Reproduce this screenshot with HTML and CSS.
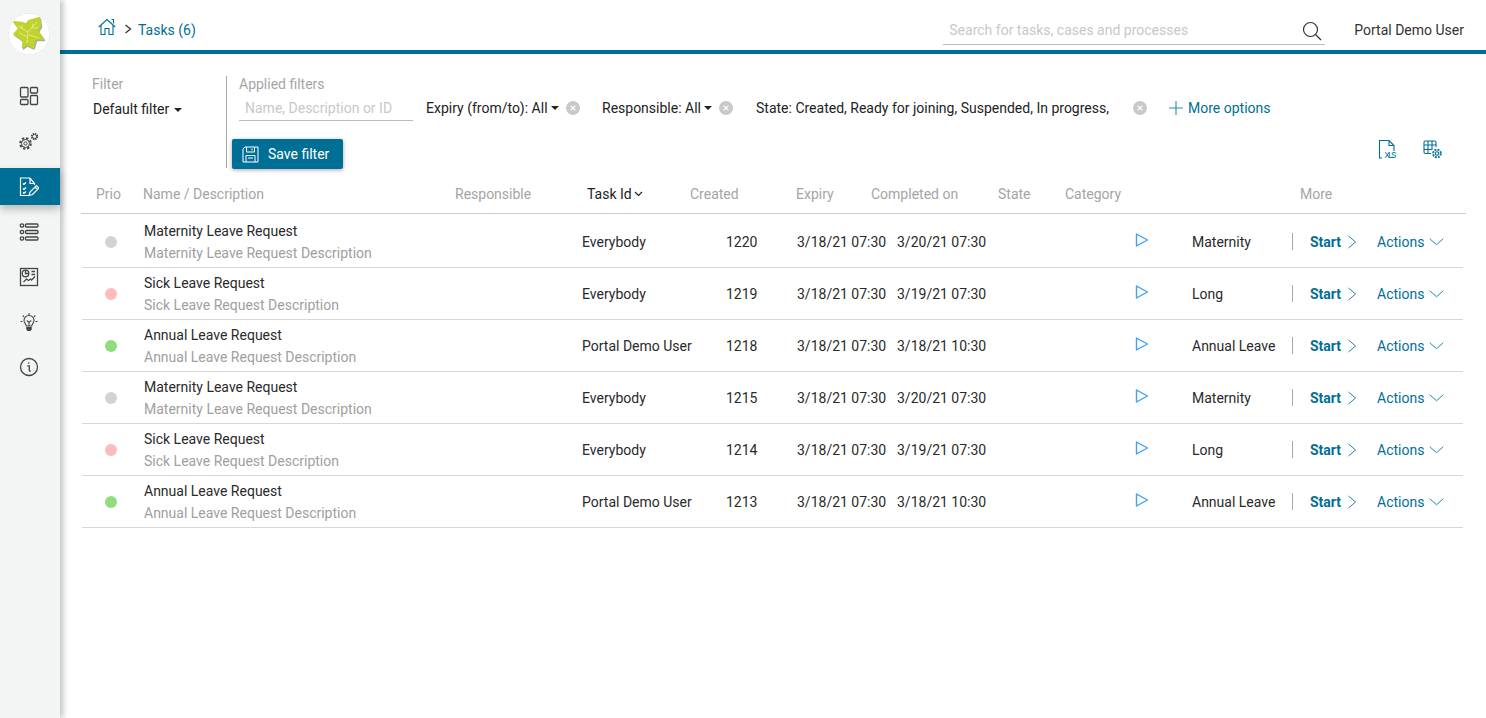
FILE: index.html
```html
<!DOCTYPE html>
<html lang="en">
<head>
  <meta charset="UTF-8">
  <title>Tasks</title>
  <link rel="stylesheet" href="styles.css">
</head>
<body>
  <svg class="defs" width="0" height="0">
    <symbol id="play" viewBox="0 0 14 14"><path d="M1.500 1l11 6-11 6z" fill="none" stroke="#3f9ef5" stroke-width="1.400" stroke-linejoin="round"/></symbol>
    <symbol id="chev-right" viewBox="0 0 10 14"><path d="M1.500 1l7 6-7 6" fill="none" stroke="#2a86a6" stroke-width="1"/></symbol>
    <symbol id="chev-down" viewBox="0 0 15 8"><path d="M.7.7l6.800 6 6.800-6" fill="none" stroke="#2a86a6" stroke-width="1"/></symbol>
    <symbol id="clear" viewBox="0 0 14 14"><circle cx="7" cy="7" r="7" fill="#c9c9c9"/><path d="M4.600 4.600l4.800 4.800M9.400 4.600l-4.800 4.800" stroke="#fff" stroke-width="1.200"/></symbol>
  </svg>

  <aside class="sidebar">
    <div class="logo">
      <svg width="34" height="36" viewBox="0 0 34 36">
        <path d="M2 5.700L9.700 6.500 14 8 17 4.500 27.500 1.800 28.500 9.700 25.500 15 31.500 23 23.700 23 21 31.500 14.500 28.500 10.500 31.500 11.300 24.700 2 18 7 12.500z" fill="#a9aea2" stroke="#a9aea2" stroke-width="1.500" stroke-linejoin="round" transform="translate(1 1.500)"/>
        <path d="M2 5.700L9.700 6.500 14 8 17 4.500 27.500 1.800 28.500 9.700 25.500 15 31.500 23 23.700 23 21 31.500 14.500 28.500 10.500 31.500 11.300 24.700 2 18 7 12.500z" fill="#c0d22c" stroke="#c0d22c" stroke-width="1.500" stroke-linejoin="round"/>
        <path d="M15 27l1-11-10-6M16 16l9-10M17 19l10 3M15.500 21l-8-4M20 12l1-4M21 12l5 0M10 13l0-4" stroke="#e6eeb0" stroke-width=".8" fill="none"/>
      </svg>
    </div>
    <nav class="nav">
      <a class="nav-item">
        <svg width="20" height="20" viewBox="0 0 20 20" fill="none" stroke="#444" stroke-width="1.300"><rect x="1.500" y="1.500" width="7.500" height="9.500" rx="1"/><rect x="11.500" y="1.500" width="7" height="5.500" rx="1"/><rect x="1.500" y="13.500" width="7.500" height="5" rx="1"/><rect x="11.500" y="9.500" width="7" height="9" rx="1"/></svg>
      </a>
      <a class="nav-item nav-gears">
        <svg width="20" height="20" viewBox="0 0 20 20" fill="none" stroke="#444"><circle cx="6.500" cy="11.500" r="5.300" stroke-dasharray="2.300 1.860" stroke-width="2"/><circle cx="6.500" cy="11.500" r="4" stroke-width="1"/><circle cx="6.500" cy="11.500" r="1.600" stroke-width="1"/><circle cx="15.500" cy="4.500" r="2.900" stroke-dasharray="1.400 .88" stroke-width="1.500"/><circle cx="15.500" cy="4.500" r="2.100" stroke-width="1"/></svg>
      </a>
      <a class="nav-item active">
        <svg width="20" height="20" viewBox="0 0 20 20" fill="none" stroke="#fff" stroke-width="1.200"><path d="M10 18.500H1.500V1H11l4.500 5.500V8"/><path d="M11 1v5.500h4.500M4 6.500l1 1 2-2M4 11.500l1 1 2-2M4 15.500l1 1 2-2"/><path d="M10 18.500l1-3.500 6.500-6.500 2.500 2.500-6.500 6.500zM16 10l2.500 2.500"/></svg>
      </a>
      <a class="nav-item">
        <svg width="20" height="20" viewBox="0 0 20 20" fill="none" stroke="#444" stroke-width="1.300"><circle cx="3" cy="3.500" r="1.700"/><circle cx="3" cy="10" r="1.700"/><circle cx="3" cy="16.500" r="1.700"/><rect x="6.500" y="2" width="12.500" height="3" rx="1"/><rect x="6.500" y="8.500" width="12.500" height="3" rx="1"/><rect x="6.500" y="15" width="12.500" height="3" rx="1"/></svg>
      </a>
      <a class="nav-item">
        <svg width="20" height="20" viewBox="0 0 20 20" fill="none" stroke="#444" stroke-width="1.300"><rect x="1.500" y="1.500" width="17" height="17"/><circle cx="6.500" cy="6.500" r="3.300"/><path d="M6.500 3.200V6.500h3.300M12.500 4.500h3.500M12.500 7.500h3.500M4.500 15l3-3 2 1.500 2-1.500 1 1 3.500-3.500"/></svg>
      </a>
      <a class="nav-item">
        <svg width="20" height="20" viewBox="0 0 20 20" fill="none" stroke="#444" stroke-width="1.100"><path d="M7.300 14c0-2-2.300-3-2.300-5.500a5 5 0 0110 0c0 2.500-2.300 3.500-2.300 5.500zM10 1v2M1.500 9.500h2M16.500 9.500h2M3.700 3.500l1.300 1.300M16.300 3.500L15 4.800M7.800 8.500l2.200 2 2.200-2M10 10.500V14"/><path d="M7.800 15.500h4.400v1.500l-1 1.500H8.800l-1-1.500z" fill="#444"/></svg>
      </a>
      <a class="nav-item">
        <svg width="20" height="20" viewBox="0 0 20 20" fill="none" stroke="#444" stroke-width="1.300"><circle cx="10" cy="10" r="8.500"/><path d="M8.300 8.800H10.300V13.300c0 .8.700 1 1.500.6"/><circle cx="9.800" cy="6" r=".8" fill="#444" stroke="none"/></svg>
      </a>
    </nav>
  </aside>

  <main class="main">
    <header class="topbar">
      <div class="breadcrumb">
        <svg class="crumb-home" width="18" height="18" viewBox="0 0 18 18" fill="none" stroke="#006f95" stroke-width="1.100"><path d="M.8 9L9 1.500 17.200 9M3 7.500V16.500h4V10.500h4V16.500h4V7.500M13.500 1.500H15.500V5.500"/></svg>
        <svg class="crumb-sep" width="8" height="10" viewBox="0 0 8 10" fill="none" stroke="#333" stroke-width="1.300"><path d="M1.500 1l5 4-5 4"/></svg>
        <span class="crumb-link">Tasks (6)</span>
      </div>
      <div class="search">
        <span class="search-text">Search for tasks, cases and processes</span>
        <svg width="20" height="20" viewBox="0 0 20 20" fill="none" stroke="#333" stroke-width="1.200"><circle cx="8.500" cy="8.500" r="7"/><path d="M13.500 13.500l5.500 5.500"/></svg>
      </div>
      <span class="user">Portal Demo User</span>
    </header>

    <section class="filters">
      <div class="filter-default">
        <div class="filter-label">Filter</div>
        <div class="filter-select">Default filter <i class="caret"></i></div>
      </div>
      <div class="filter-applied">
        <div class="filter-label">Applied filters</div>
        <div class="filter-line">
          <span class="filter-input">Name, Description or ID</span>
          <span class="chip chip-expiry">Expiry (from/to): All <i class="caret"></i><svg width="14" height="14"><use href="#clear"/></svg></span>
          <span class="chip chip-resp">Responsible: All <i class="caret"></i><svg width="14" height="14"><use href="#clear"/></svg></span>
          <span class="chip chip-state">State: Created, Ready for joining, Suspended, In progress,<svg width="14" height="14"><use href="#clear"/></svg></span>
          <span class="more-options">
            <svg width="14" height="14" viewBox="0 0 14 14" stroke="#2a8cab" stroke-width="1.100"><path d="M7 0v14M0 7h14"/></svg>
            More options
          </span>
        </div>
        <div class="filter-actions">
          <button class="save-btn">
            <svg width="17" height="17" viewBox="0 0 17 17" fill="none" stroke="#fff" stroke-width="1"><path d="M1 3l2-2h13v15H1zM4.500 1v5h8V1M10 2.500v2M4 16v-6.500h9V16M6 12h5"/></svg>
            Save filter
          </button>
          <div class="export-icons">
            <svg class="xls-icon" width="20" height="22" viewBox="0 0 20 22" fill="none" stroke="#006f95" stroke-width="1.100"><path d="M4 18H1.500V.5H11l5 5v5.500M11 .5v5h5"/><text x="6.500" y="18" class="xls" textLength="12">XLS</text></svg>
            <svg width="20" height="20" viewBox="0 0 20 20" fill="none" stroke="#006f95" stroke-width="1.100"><path d="M8 13.500H2.500a1.500 1.500 0 01-1.500-1.500V2.500A1.500 1.500 0 012.500 1h9A1.500 1.500 0 0113 2.500V7M1 5h12M1 9.500h8M5 1v12.500M9 1v9"/><circle cx="14" cy="13.500" r="1.700"/><circle cx="14" cy="13.500" r="3.900" stroke-dasharray="2 1.060" stroke-width="1.800"/></svg>
          </div>
        </div>
      </div>
    </section>

    <section class="tasks">
      <div class="task-head">
        <span class="h-prio">Prio</span>
        <span class="h-name">Name / Description</span>
        <span class="h-resp">Responsible</span>
        <span class="h-id">Task Id<svg width="9" height="6" viewBox="0 0 9 6" fill="none" stroke="#222" stroke-width="1.200"><path d="M1 1l3.500 3.500L8 1"/></svg></span>
        <span class="h-created">Created</span>
        <span class="h-expiry">Expiry</span>
        <span class="h-completed">Completed on</span>
        <span class="h-state">State</span>
        <span class="h-cat">Category</span>
        <span class="h-more">More</span>
      </div>

      <div class="task-row first">
        <span class="dot grey"></span>
        <div class="task-name"><div>Maternity Leave Request</div><div class="desc">Maternity Leave Request Description</div></div>
        <span>Everybody</span><span>1220</span><span>3/18/21 07:30</span><span>3/20/21 07:30</span>
        <svg class="play" width="14" height="14"><use href="#play"/></svg>
        <span>Maternity</span>
        <span class="task-links"><a class="start">Start</a><svg width="10" height="14"><use href="#chev-right"/></svg><a class="actions">Actions</a><svg width="15" height="8"><use href="#chev-down"/></svg></span>
      </div>
      <div class="task-row">
        <span class="dot pink"></span>
        <div class="task-name"><div>Sick Leave Request</div><div class="desc">Sick Leave Request Description</div></div>
        <span>Everybody</span><span>1219</span><span>3/18/21 07:30</span><span>3/19/21 07:30</span>
        <svg class="play" width="14" height="14"><use href="#play"/></svg>
        <span>Long</span>
        <span class="task-links"><a class="start">Start</a><svg width="10" height="14"><use href="#chev-right"/></svg><a class="actions">Actions</a><svg width="15" height="8"><use href="#chev-down"/></svg></span>
      </div>
      <div class="task-row">
        <span class="dot green"></span>
        <div class="task-name"><div>Annual Leave Request</div><div class="desc">Annual Leave Request Description</div></div>
        <span>Portal Demo User</span><span>1218</span><span>3/18/21 07:30</span><span>3/18/21 10:30</span>
        <svg class="play" width="14" height="14"><use href="#play"/></svg>
        <span>Annual Leave</span>
        <span class="task-links"><a class="start">Start</a><svg width="10" height="14"><use href="#chev-right"/></svg><a class="actions">Actions</a><svg width="15" height="8"><use href="#chev-down"/></svg></span>
      </div>
      <div class="task-row">
        <span class="dot grey"></span>
        <div class="task-name"><div>Maternity Leave Request</div><div class="desc">Maternity Leave Request Description</div></div>
        <span>Everybody</span><span>1215</span><span>3/18/21 07:30</span><span>3/20/21 07:30</span>
        <svg class="play" width="14" height="14"><use href="#play"/></svg>
        <span>Maternity</span>
        <span class="task-links"><a class="start">Start</a><svg width="10" height="14"><use href="#chev-right"/></svg><a class="actions">Actions</a><svg width="15" height="8"><use href="#chev-down"/></svg></span>
      </div>
      <div class="task-row">
        <span class="dot pink"></span>
        <div class="task-name"><div>Sick Leave Request</div><div class="desc">Sick Leave Request Description</div></div>
        <span>Everybody</span><span>1214</span><span>3/18/21 07:30</span><span>3/19/21 07:30</span>
        <svg class="play" width="14" height="14"><use href="#play"/></svg>
        <span>Long</span>
        <span class="task-links"><a class="start">Start</a><svg width="10" height="14"><use href="#chev-right"/></svg><a class="actions">Actions</a><svg width="15" height="8"><use href="#chev-down"/></svg></span>
      </div>
      <div class="task-row">
        <span class="dot green"></span>
        <div class="task-name"><div>Annual Leave Request</div><div class="desc">Annual Leave Request Description</div></div>
        <span>Portal Demo User</span><span>1213</span><span>3/18/21 07:30</span><span>3/18/21 10:30</span>
        <svg class="play" width="14" height="14"><use href="#play"/></svg>
        <span>Annual Leave</span>
        <span class="task-links"><a class="start">Start</a><svg width="10" height="14"><use href="#chev-right"/></svg><a class="actions">Actions</a><svg width="15" height="8"><use href="#chev-down"/></svg></span>
      </div>
    </section>
  </main>
</body>
</html>
```
FILE: styles.css
```css
* {
  margin: 0;
  padding: 0;
  box-sizing: border-box;
}

html, body {
  height: 100%;
  overflow: hidden;
}

body {
  font-family: Roboto, sans-serif;
  font-size: 14px;
  color: #222;
  background: #fff;
  display: flex;
}

.defs {
  position: absolute;
}

svg {
  display: block;
  flex: none;
}

/* sidebar */
.sidebar {
  width: 60px;
  flex: none;
  background: #f3f5f4;
  box-shadow: 3px 0 6px rgba(0, 0, 0, 0.25);
  padding-top: 13px;
  position: relative;
}

.logo {
  width: 42px;
  height: 42px;
  margin-left: 8px;
  border-radius: 50%;
  background: #fff;
  border: 1px dotted #ddd;
  display: flex;
  align-items: center;
  justify-content: center;
}

.nav {
  margin-top: 18.500px;
  display: flex;
  flex-direction: column;
}

.nav-item {
  height: 45px;
  display: flex;
  align-items: center;
  justify-content: center;
}

.nav-item svg {
  margin-left: -2px;
}

.nav-gears svg {
  margin-top: 2px;
}

.nav-item.active {
  height: 37px;
  margin: 4.500px 0;
  background: #006f95;
  box-shadow: 0 4px 8px rgba(0, 0, 0, 0.25);
}

/* top bar */
.main {
  flex: 1;
  min-width: 0;
}

.topbar {
  height: 54px;
  border-bottom: 4px solid #006f95;
  display: flex;
  align-items: center;
  padding: 10px 22px 0 38px;
}

.breadcrumb {
  display: flex;
  align-items: center;
  flex: 1;
}

.crumb-home {
  margin-top: -6px;
}

.crumb-sep {
  margin: -2px 6px 0 8px;
}

.crumb-link {
  color: #006f95;
}

.search {
  width: 382px;
  height: 29px;
  margin-right: 29px;
  border-bottom: 1px solid #bbb;
  display: flex;
  align-items: center;
  justify-content: space-between;
  padding: 0 3px 0 6px;
}

.search svg {
  margin-top: 3px;
}

.search-text {
  color: #c8c8c8;
}

.user {
  color: #333;
}

/* filters */
.filters {
  display: flex;
  padding: 22px 0 0 32px;
  height: 120px;
}

.filter-label {
  color: #a5a5a5;
  line-height: 17px;
}

.filter-default {
  width: 135px;
  border-right: 1px solid #aaa;
  height: 92px;
}

.filter-select {
  margin: 8px 0 0 1px;
  line-height: 17px;
}

.caret {
  display: inline-block;
  border: 4px solid transparent;
  border-top: 4px solid #222;
  border-bottom: 0;
  vertical-align: 2px;
  margin-left: 1px;
}

.filter-applied {
  flex: 1;
  padding-left: 12px;
}

.filter-line {
  display: flex;
  align-items: center;
  height: 27px;
  margin-top: 1px;
}

.filter-input {
  width: 174px;
  height: 27px;
  line-height: 28px;
  padding-left: 6px;
  color: #c8c8c8;
  border-bottom: 1px solid #bbb;
}

.chip {
  display: flex;
  align-items: center;
  white-space: pre;
  color: #222;
}

.chip .caret {
  margin: 0 7px 0 0;
}

.chip-expiry {
  margin-left: 13px;
  width: 176px;
}

.chip-resp {
  width: 154px;
}

.chip-state svg {
  margin-left: 24px;
}

.more-options {
  display: flex;
  align-items: center;
  gap: 5px;
  color: #006f95;
  margin-left: 22px;
}

.filter-actions {
  display: flex;
  justify-content: space-between;
  margin: 18px 0 0 -7px;
  padding-right: 43px;
}

.save-btn {
  width: 111px;
  height: 30px;
  display: flex;
  align-items: center;
  gap: 9px;
  padding-left: 10px;
  color: #fff;
  background: #006f95;
  border: 0;
  border-radius: 2px;
  font: 400 14px Roboto, sans-serif;
  box-shadow: 0 1px 4px rgba(0, 0, 0, 0.35);
}

.export-icons {
  display: flex;
  gap: 25px;
  margin-top: 1px;
}

.xls {
  font: 400 9px "Liberation Mono", monospace;
  fill: #006f95;
  stroke: none;
}

/* table */
.tasks {
  padding: 0 20px 0 21px;
}

.task-head {
  display: grid;
  grid-template-columns: 47px 312px 132px 103px 106px 75px 127px 67px 235px 1fr;
  height: 40px;
  align-items: center;
  padding-left: 15px;
  color: #a5a5a5;
  border-bottom: 1px solid #ccc;
}

.h-id {
  color: #222;
  display: flex;
  align-items: center;
  gap: 2px;
}

.task-row {
  display: grid;
  grid-template-columns: 62px 438px 144px 71px 100px 239px 56px 100px 1fr;
  height: 52px;
  align-items: center;
  border-bottom: 1px solid #d6d6d6;
  margin: 0 3px 0 1px;
  color: #2a2a2a;
}

.task-row.first {
  height: 54px;
  padding-top: 2px;
}

.dot {
  width: 12px;
  height: 12px;
  border-radius: 50%;
  margin-left: 23px;
}

.dot.grey {
  background: #d3d3d3;
}

.dot.pink {
  background: #fdbcbc;
}

.dot.green {
  background: #91dd7e;
}

.task-name {
  line-height: 22px;
  margin-top: 1px;
}

.desc {
  color: #a0a0a0;
}

.play {
  margin: -4px 0 0 -1px;
}

.task-links {
  display: flex;
  align-items: center;
  height: 17px;
  border-left: 1px solid #aaa;
  padding-left: 17px;
}

.start {
  font-weight: 700;
  color: #006f95;
  margin-right: 6px;
}

.actions {
  color: #006f95;
  margin: 0 5px 0 20px;
}
```
